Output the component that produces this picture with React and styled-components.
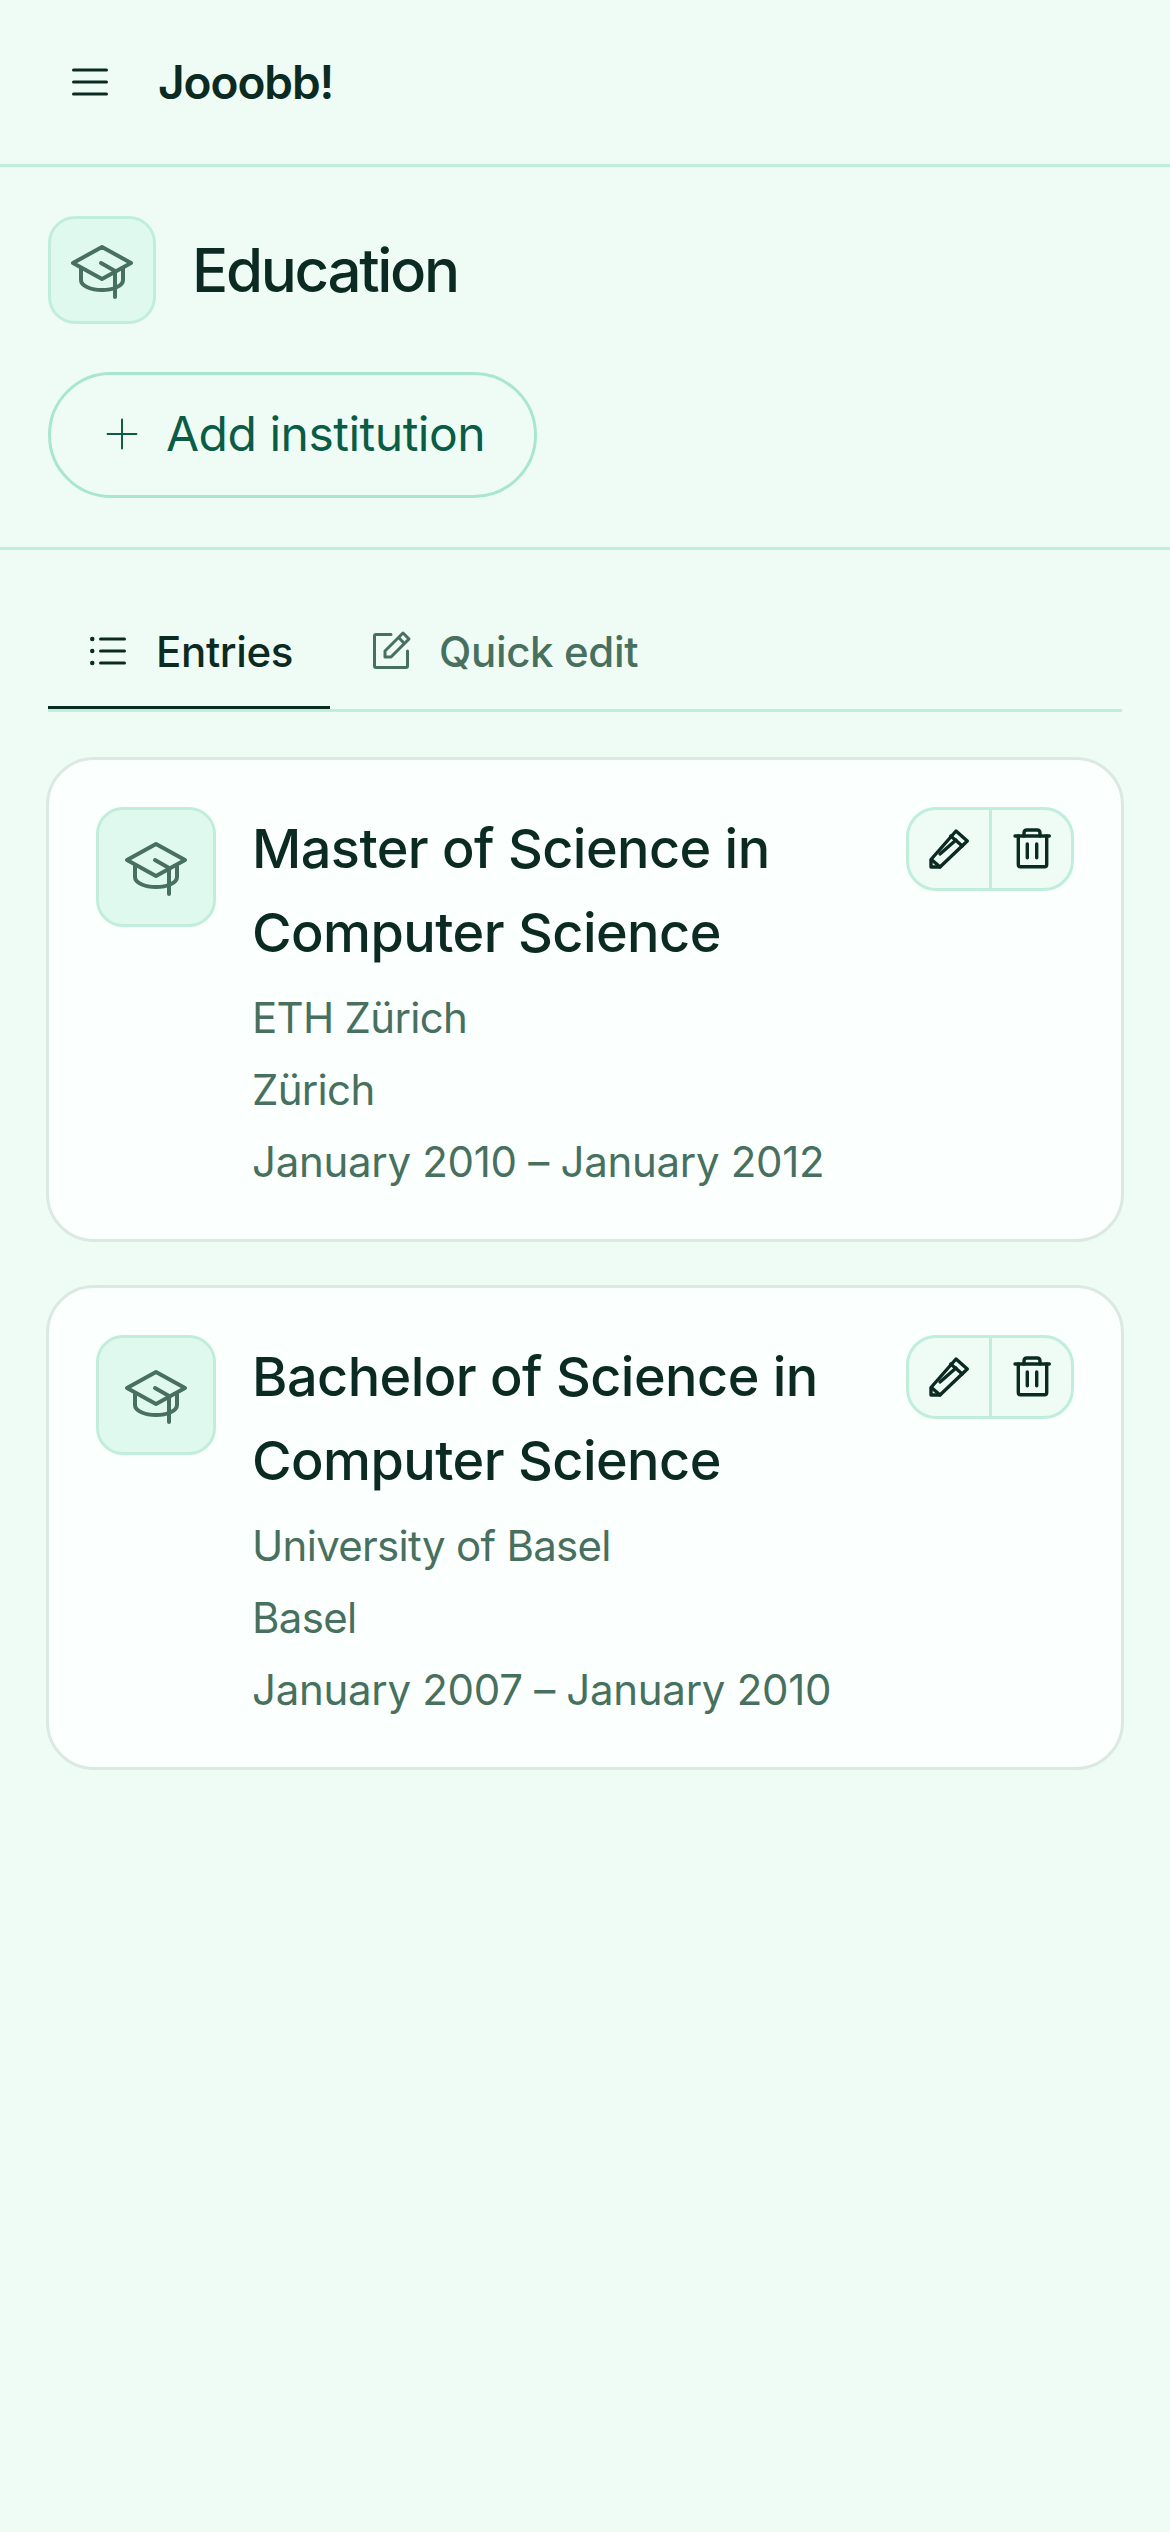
import React from "react"
import styled, { createGlobalStyle } from "styled-components"
import { PiList, PiPlusLight, PiListBullets, PiNotePencil } from "react-icons/pi"

const GlobalStyle = createGlobalStyle`
  * { box-sizing: border-box; }
  html, body { margin: 0; padding: 0; background: #effcf5; }
  body { font-family: "Inter", "Liberation Sans", sans-serif; color: #0b2b22; }
`

const Page = styled.div`
  width: 1170px;
  min-height: 2532px;
  background: #effcf5;
`

const TopBar = styled.header`
  height: 167px;
  display: flex;
  align-items: center;
  gap: 44px;
  padding-left: 66px;
  border-bottom: 3px solid #c0eedd;
  color: #0b2b22;
`

const Brand = styled.div`
  font-size: 46px;
  font-weight: 600;
  letter-spacing: -1.1px;
`

const SectionHead = styled.section`
  height: 383px;
  padding: 49px 48px 0;
  border-bottom: 3px solid #c0eedd;
`

const TitleRow = styled.div`
  display: flex;
  align-items: center;
  gap: 36px;
`

const IconBox = styled.div`
  flex: none;
  width: ${(p) => p.$size}px;
  height: ${(p) => p.$size}px;
  display: flex;
  align-items: center;
  justify-content: center;
  background: #e0f9ee;
  border: 3px solid #c0eedd;
  border-radius: 27px;
  color: #47705f;
`

const Heading = styled.h1`
  margin: 0;
  font-size: 60px;
  font-weight: 500;
  letter-spacing: -2.3px;
  color: #0b2b22;
`

const AddButton = styled.button`
  margin-top: 48px;
  width: 489px;
  height: 126px;
  display: flex;
  align-items: center;
  gap: 23px;
  padding: 0 0 3px 50px;
  background: transparent;
  border: 3px solid #a8e6d0;
  border-radius: 63px;
  color: #0b5c45;
  font-family: inherit;
  font-size: 48px;
  font-weight: 400;
  letter-spacing: -0.5px;
`

const Content = styled.main`
  padding: 48px 46px 0;
`

const Tabs = styled.nav`
  display: flex;
  margin: 0 2px;
  border-bottom: 3px solid #c0eedd;
`

const Tab = styled.div`
  height: 111px;
  display: flex;
  align-items: center;
  gap: 24px;
  padding: 0 ${(p) => (p.$active ? 37 : 0)}px 2px ${(p) => (p.$active ? 36 : 37)}px;
  border-bottom: 3px solid ${(p) => (p.$active ? "#0b2b22" : "transparent")};
  color: ${(p) => (p.$active ? "#0b2b22" : "#47705f")};
  font-size: 42px;
  font-weight: 500;
  letter-spacing: -0.35px;
`

const Card = styled.article`
  margin-top: ${(p) => p.$top}px;
  height: 485px;
  display: flex;
  gap: 36px;
  padding: 47px 47px 0;
  background: #fbfffd;
  border: 3px solid #dbe9e3;
  border-radius: 48px;
`

const CardBody = styled.div`
  flex: 1;
  min-width: 0;
`

const CardTitle = styled.h2`
  margin: 0 0 7px;
  font-size: 54px;
  line-height: 84px;
  font-weight: 500;
  letter-spacing: -0.55px;
  color: #0b2b22;
`

const Detail = styled.div`
  font-size: 42px;
  line-height: 72px;
  letter-spacing: ${(p) => (p.$dates ? "-0.3px" : "-0.7px")};
  color: #47705f;
`

const Actions = styled.div`
  flex: none;
  align-self: flex-start;
  height: 84px;
  display: flex;
  background: #effcf5;
  border: 3px solid #c0eedd;
  border-radius: 30px;
  color: #0b2b22;
`

const ActionButton = styled.div`
  width: ${(p) => p.$width}px;
  display: flex;
  align-items: center;
  justify-content: center;
  & + & { border-left: 3px solid #c0eedd; }
`

const CapIcon = () => (
  <svg width="80" height="80" viewBox="0 0 80 80" fill="none" stroke="currentColor" strokeWidth="4" strokeLinecap="round" strokeLinejoin="round">
    <path d="M40 17L11 33L40 49L69 33Z" />
    <path d="M39 33L53 41V67" />
    <path d="M19 38V50C19 56 29 60 40 60C51 60 61 56 61 50V38" />
  </svg>
)

const PencilIcon = () => (
  <svg width="48" height="48" viewBox="5 9 48 48" fill="none" stroke="currentColor" strokeWidth="3.4" strokeLinecap="round" strokeLinejoin="round">
    <path d="M11 43.5L36 15L47.3 25L20 51H11Z" />
    <path d="M30.7 20L42.3 30" />
    <path d="M20 38L36 24" />
    <path d="M12 44L20 51" />
  </svg>
)

const TrashIcon = () => (
  <svg width="48" height="48" viewBox="88 9 48 48" fill="none" stroke="currentColor" strokeWidth="3.4" strokeLinecap="round" strokeLinejoin="round">
    <path d="M95 20H129.3" />
    <path d="M98.3 20V48.5Q98.3 50.7 100.5 50.7H124.5Q126.7 50.7 126.7 48.5V20" />
    <path d="M104 20V17Q104 14 107 14H117Q120 14 120 17V20" />
    <path d="M107.3 28V41.7" />
    <path d="M116.7 28V41.7" />
  </svg>
)

const entries = [
  {
    title: "Master of Science in Computer Science",
    school: "ETH Zürich",
    city: "Zürich",
    dates: "January 2010 – January 2012",
  },
  {
    title: "Bachelor of Science in Computer Science",
    school: "University of Basel",
    city: "Basel",
    dates: "January 2007 – January 2010",
  },
]

export default function App() {
  return (
    <Page>
      <GlobalStyle />
      <TopBar>
        <PiList size={48} />
        <Brand>Jooobb!</Brand>
      </TopBar>
      <SectionHead>
        <TitleRow>
          <IconBox $size={108}>
            <CapIcon />
          </IconBox>
          <Heading>Education</Heading>
        </TitleRow>
        <AddButton>
          <PiPlusLight size={42} />
          Add institution
        </AddButton>
      </SectionHead>
      <Content>
        <Tabs>
          <Tab $active>
            <PiListBullets size={48} />
            Entries
          </Tab>
          <Tab>
            <PiNotePencil size={48} />
            Quick edit
          </Tab>
        </Tabs>
        {entries.map((entry, i) => (
          <Card key={entry.title} $top={i === 0 ? 45 : 43}>
            <IconBox $size={120}>
              <CapIcon />
            </IconBox>
            <CardBody>
              <CardTitle>{entry.title}</CardTitle>
              <Detail>{entry.school}</Detail>
              <Detail>{entry.city}</Detail>
              <Detail $dates>{entry.dates}</Detail>
            </CardBody>
            <Actions>
              <ActionButton $width={80}>
                <PencilIcon />
              </ActionButton>
              <ActionButton $width={82}>
                <TrashIcon />
              </ActionButton>
            </Actions>
          </Card>
        ))}
      </Content>
    </Page>
  )
}
